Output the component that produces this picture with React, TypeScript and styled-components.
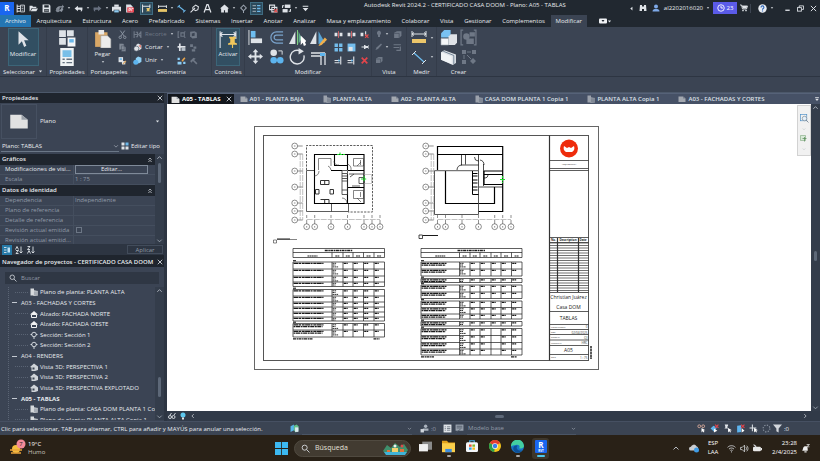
import React from "react";
import styled, { createGlobalStyle } from "styled-components";

const c = {
  bar: "#212830",
  ribbon: "#3b4453",
  line: "#2d3542",
  dark: "#1f252e",
  pane: "#3b4454",
  text: "#e8ebef",
  dim: "#929ba8",
  blue: "#6cb8ea",
  icon: "#dfe3e8",
  off: "#6f7886",
};

const Global = createGlobalStyle`
  *, *::before, *::after { box-sizing: border-box; }
  html, body { margin: 0; }
  body { background: ${c.ribbon}; color: ${c.text}; font-family: "Open Sans", "Noto Sans", sans-serif; font-size: 6px; line-height: 8px; overflow: hidden; }
  button, input, select { font: inherit; color: inherit; margin: 0; padding: 0; border: 0; background: none; border-radius: 0; }
  button { display: inline-flex; align-items: center; justify-content: center; white-space: nowrap; }
  svg { display: block; flex: none; }
`;

/* ---------- icons, all on a 16 unit grid ---------- */
const W = c.icon;
const S = { fill: "none", stroke: W, strokeWidth: 1.8 };
const icons: Record<string, React.ReactNode> = {
  home: <><path d="M2 1v14M2 4h5M2 8h5M2 13h5" {...S} /><path d="M8 2h7v12H8z" fill="none" stroke={W} strokeWidth="1.5" /><path d="M10 5h3M10 8h3M10 11h3" {...S} strokeWidth="1.2" /></>,
  open: <path d="M1 13V3h5l1 2h6v2H5l-3 6zm2 0 3-5h10l-3 5z" fill={W} />,
  save: <path d="M1 1h12l2 2v12H1zm3 1v4h8V2zm0 7v5h8V9zm1 1h6v1H5zm0 2h6v1H5z" fill={W} fillRule="evenodd" />,
  sync: <><path d="M2 8l4-4 3 3-4 5zM8 12l4 2 3-5-3-3z" fill="#8d95a0" /><path d="M7 4h6V1l3 4-3 3V6H7z" fill="#8d95a0" /><circle cx="5" cy="11" r="3.500" fill="#7d8590" /></>,
  undo: <path d="M1 8l6-5v3h8v3c0 3-1 4-3 5 1-3 0-4-2-4H7v3z" fill={W} />,
  redo: <path d="M15 8L9 3v3H1v3c0 3 1 4 3 5-1-3 0-4 2-4h3v3z" fill="#687180" />,
  print: <><path d="M4 1h8v4H4z" fill={W} /><path d="M0 5h16v8h-3v-3H3v3H0z" fill={W} /><path d="M4 11h8v4H4z" fill="#8dc9ee" /></>,
  pdf: <><path d="M2 1h8l4 4v10H2z" fill="#dbe0e6" /><path d="M4 6h12v9H4z" fill="#e8414e" /><path d="M7 13V8h3v3H7M12 13V8h3" stroke="#fff" fill="none" strokeWidth="1.3" /></>,
  pinDim: <><path d="M1 1v14M1 4h13M14 1v6" {...S} /><path d="M8 7h6v2l-1 1v2h2v1H7v-1h2v-2L8 9z" fill="#e6c56a" /></>,
  measure: <><path d="M1 2v5M1 4h14M15 2v5" {...S} /><rect x="0" y="9" width="16" height="5" fill="#e8c668" /></>,
  align: <><path d="M3 4l10 8" stroke={c.blue} strokeWidth="1.8" fill="none" /><path d="M1 6l4-4M11 15l4-4" stroke={c.blue} strokeWidth="1.8" /></>,
  tag: <><path d="M5 6l5-4 5 3-1 5-4 2-5-3z" {...S} /><path d="M1 15L9 7" {...S} /></>,
  text: <path d="M2 15L7 1h2l5 14M4 10h8" {...S} strokeWidth="2.2" />,
  house3d: <path d="M0 8l8-7 8 7h-2v7H9v-4H7v4H2V8z" fill={W} />,
  section: <><circle cx="8" cy="7" r="4.500" {...S} /><path d="M1 7h3M12 7h3M8 12v4" {...S} /></>,
  sectionOff: <><path d="M8 2l5 5-5 5-5-5z" fill="none" stroke="#98a1ad" strokeWidth="1.800" /><path d="M8 12v4" stroke="#98a1ad" strokeWidth="1.800" /></>,
  thin: <><path d="M1 3h6M1 8h6M1 13h6" {...S} strokeWidth="1.2" /><path d="M9 3h6M9 8h6M9 13h6" stroke={c.blue} strokeWidth="2.4" /></>,
  closeHidden: <><path d="M1 2h9v8H1zM5 6h9v8H5z" {...S} /><path d="M9 9l6 6M15 9l-6 6" stroke="#e24c4c" strokeWidth="2" /></>,
  windows: <><rect x="5" y="1" width="10" height="6" fill={W} /><rect x="1" y="9" width="9" height="6" fill={W} /><path d="M1 7V3h3M15 9v4h-3" {...S} /></>,
  more: <path d="M3 3h10v2H3zM3 7h10l-5 6z" fill={W} />,
  bino: <path d="M2 2h4v3h4V2h4l1 12h-5v-4H6v4H1z" fill={W} />,
  user: <><circle cx="8" cy="5" r="4" fill="#7ea9e8" /><path d="M1 15c0-4 3-5 7-5s7 1 7 5z" fill="#7ea9e8" /></>,
  clock: <><circle cx="8" cy="8" r="6.500" fill="none" stroke="#fff" strokeWidth="1.8" /><path d="M8 4v4h4" fill="none" stroke="#fff" strokeWidth="1.8" /></>,
  cart: <><path d="M0 2h3l2 8h8l2-6H4" {...S} /><path d="M4 4h10l-1 5H6z" fill={W} /><circle cx="6" cy="13" r="1.700" fill={W} /><circle cx="12" cy="13" r="1.700" fill={W} /></>,
  help: <><circle cx="8" cy="8" r="7.500" fill="#e8ecf2" /><path d="M5.500 6c0-4 5-3 5 0 0 2-2.500 2-2.500 4M8 11.500V13.500" fill="none" stroke="#2d65b8" strokeWidth="2" /></>,
  min: <path d="M3 12h10" stroke={W} strokeWidth="3" />,
  restore: <><rect x="1" y="6" width="9" height="8" {...S} strokeWidth="2" /><path d="M5 6V2h10v8h-4" {...S} strokeWidth="2" /></>,
  close: <path d="M2 2l12 12M14 2L2 14" stroke={W} strokeWidth="2.2" />,
  left: <path d="M11 2v12L4 8z" fill={W} />,
  arrow: <path d="M4 1v12l3-3 2 5 2-1-2-5h4z" fill={W} />,
  props: <><path d="M1 1h6v6H1zM8 1h6v6H8zM1 8h6v6H1z" fill={W} /><path d="M8 7h8v9H8z" fill="#f3f5f7" stroke={c.ribbon} /><rect x="10" y="9" width="4" height="3" fill={c.blue} /></>,
  propSheet: <><rect x="2" y="0" width="12" height="16" fill="#f0f3f5" /><rect x="4" y="2" width="8" height="6" fill="#79bfe8" /><path d="M4 10h2M7.500 10h5M4 13h2M7.500 13h5" stroke="#63717f" strokeWidth="1.2" /></>,
  paste: <><rect x="1" y="2" width="11" height="13" fill="#d9a766" /><rect x="4" y="0" width="5" height="4" fill="#e8e8e8" /><path d="M6 5h6l3 3v8H6z" fill="#ececec" stroke="#9a9a9a" strokeWidth=".5" /></>,
  cut: <><circle cx="4" cy="13" r="2.200" fill="none" stroke={c.dim} strokeWidth="1.500" /><circle cx="12" cy="13" r="2.200" fill="none" stroke={c.dim} strokeWidth="1.500" /><path d="M5 11l7-10M11 11L4 1" stroke={c.dim} strokeWidth="1.600" /></>,
  copy: <path d="M2 1h7l2 2v9H2zM6 5h5l3 3v7H6z" fill="#838c98" stroke={c.ribbon} strokeWidth=".8" />,
  match: <><rect x="1" y="2" width="8" height="9" fill={W} /><rect x="3" y="4" width="4" height="3" fill={c.blue} /><path d="M7 9h6v6H7z" fill={W} /><path d="M9 14l5-5" stroke="#d9a766" strokeWidth="2.500" /></>,
  cope: <path d="M2 2v12M2 8h6M5 4h3v8H5M14 2v12M14 4l-4 4 4 4" fill="none" stroke={c.off} strokeWidth="2" />,
  cutGeo: <><path d="M5 4l4-3 6 3v6l-4 3" fill={W} /><circle cx="6" cy="10" r="4.500" fill={W} stroke={c.ribbon} /><path d="M10 5l4-2v6z" fill="#e8786a" /></>,
  join: <><path d="M5 4l4-3 6 2v7l-4 3H5z" fill="#8fd0f5" /><circle cx="5" cy="11" r="4.500" fill="#5db4ee" /></>,
  geoA: <path d="M4 3H2v10h2M7 5h6v6H7zM13 3h2M13 13h2" fill="none" stroke={c.off} strokeWidth="2" />,
  geoB: <><path d="M2 3l8-1 4 3v9l-8 1-4-4z" fill={c.off} /><path d="M5 6l5-1v5l-5 1z" fill={c.ribbon} /></>,
  geoC: <><path d="M5 1v13M1 7h14" stroke={W} strokeWidth="3" /><path d="M8 9h7v5H8z" fill="#b9c2cb" /></>,
  geoD: <path d="M2 2h5v5H2zM8 6h5v4H8zM5 11h6v4H5z" fill={c.off} />,
  geoE: <><path d="M1 3h4v4H1zM1 10h7v5H1zM11 10h4v4h-4z" fill="#8ccdf5" /><path d="M8 8l5-6 2 2-5 6z" fill="#e9a44a" /></>,
  geoF: <path d="M2 9l6-6 4 2-3 2 6 6-2 2-6-6-3 3z" fill={c.off} />,
  activate: <><path d="M1 1v15M15 1v7M1 4h14M3 2L1 4l2 2M13 2l2 2-2 2" fill="none" stroke={W} strokeWidth="1" /><path d="M9 6h6v1l-1 1v3l2 1v1H8v-1l2-1V8L9 7zM11.500 13h1v3h-1z" fill="#f0c75c" /></>,
  alignT: <><path d="M1 0v16" stroke={W} strokeWidth="1" /><path d="M3 1h5v7H3z" fill="#6ebdf0" /><path d="M3 9h12v5H3z" fill={W} /></>,
  offset: <path d="M15 2H8a6 6 0 000 12h7M15 5.500H8a2.500 2.500 0 000 5h7" fill="none" stroke="#7aa3cc" strokeWidth="1.300" />,
  mirrorA: <><path d="M6 2v12H0z" fill={W} /><path d="M8 1v14" stroke="#7fd07f" /><path d="M9 2l3 7-3 5z" fill="#5fae8c" /><path d="M11 6v9l2-2 1 3 2-1-1-3h2z" fill="#fff" /></>,
  mirrorB: <><path d="M6 2v12H0z" fill={W} /><path d="M8 2v12l6-1z" fill="#5aa4d4" /><path d="M9 14l5-6 2 2-5 5-3 1z" fill="#f1b04c" /></>,
  move: <path d="M8 0l3 3.500H9V7h3.500V5L16 8l-3.500 3V9H9v3.500h2L8 16l-3-3.500h2V9H3.500v2L0 8l3.500-3v2H7V3.500H5z" fill={W} />,
  copyT: <><circle cx="5" cy="4" r="3.500" fill={W} /><path d="M10 2h4v4" fill="none" stroke={W} /><circle cx="5" cy="12" r="3.500" fill="#5db4ee" /><circle cx="12" cy="12" r="3.500" fill="#5db4ee" /></>,
  rotate: <><path d="M11 3a6.500 6.500 0 103 4" fill="none" stroke={W} strokeWidth="1.300" /><path d="M9 0l5 3-5 3z" fill={W} /></>,
  trim: <><path d="M0 4h14M0 7h10v9M14 4v12" fill="none" stroke={W} strokeWidth="1.300" /><path d="M9 4h5v3h-5z" fill="#5db4ee" /></>,
  split: <><path d="M1 5h5v6H1zM10 5h5v6h-5z" fill={W} /><path d="M8 2v12" stroke="#e86a6a" strokeWidth="1.500" /></>,
  splitX: <><path d="M1 5h5v6H1zM9 2h2v8H9z" fill={W} /><path d="M9 8l6 6M15 8l-6 6" stroke="#e24c4c" strokeWidth="2" /></>,
  array: <path d="M1 1h6v6H1zM9 1h6v6H9zM1 9h6v6H1zM9 9h6v6H9z" fill="#74bdec" />,
  scale: <><path d="M1 1h14v14H1z" fill="#74bdec" /><path d="M3 7h7v7H3z" fill={W} /></>,
  pin: <path d="M1 7h5V4h3v2h5V4h1v8h-1v-2H9v2H6V9H1z" fill={W} />,
  extend: <><path d="M1 8h9M1 12h9" stroke={W} strokeWidth="2" /><path d="M12 1v14" stroke={W} strokeWidth="2" /><path d="M8 5l3 3-3 3z" fill="#5db4ee" /></>,
  del: <path d="M3 3l10 10M13 3L3 13" stroke="#e2454b" strokeWidth="3" />,
  bulb: <path d="M8 1a5 5 0 00-2 9v4h4v-4a5 5 0 00-2-9z" fill={c.off} />,
  cube: <><path d="M2 5l5-3h8v8l-4 4H2z" fill={c.off} /><path d="M2 6h9v8" fill="none" stroke={c.ribbon} /></>,
  brush: <path d="M1 14l2-5 9-8 2 2-8 9z" fill={c.off} />,
  lines: <path d="M1 3h13M1 8h10M6 13h8M13 6v8" fill="none" stroke={c.off} strokeWidth="2" />,
  ruler: <><path d="M1 1v6M15 1v6M1 4h14M3 2.500L1 4l2 1.500M13 2.500L15 4l-2 1.500" fill="none" stroke={W} /><path d="M1 9h14v4H1z" fill="#ecc66a" /></>,
  diag: <><path d="M3 4l10 9" stroke="#6ebdf0" strokeWidth="1.200" /><path d="M1 6l4-4M11 15l4-4" stroke={W} /></>,
  create: <><path d="M1 4l3-3h6v4L8 8H1z" fill="#79c2f2" /><path d="M8 7l2-2h6v8l-2 2H8z" fill={W} /><path d="M1 9h7v6H1z" fill="#f4f6f8" stroke="#b8c0c8" strokeWidth=".5" /></>,
  assembly: <><path d="M3 1H1v14h2M13 1h2v14h-2" fill="none" stroke={c.off} strokeWidth="1.200" /><circle cx="6" cy="7" r="3" fill={c.off} /><path d="M6 9h7v5H6zM9 3h5v4H9z" fill={c.off} /></>,
  parts: <><path d="M1 4l3-2 11 4v8l-3 2-11-5z" fill={W} /><path d="M1 4l10 4v7L1 11z" fill="#f1f4f6" /><path d="M3 3l10 4v8" fill="none" stroke="#5e7488" strokeWidth=".8" /></>,
  group: <><path d="M1 1h4v4H1zM11 1h4v4h-4zM1 11h4v4H1zM12 9l3 3-3 3-3-3z" fill={c.off} /><path d="M6 3h4M3 6v4M6 6l4 4" fill="none" stroke={c.off} /></>,
  sheet: <><path d="M1 3h9l5 4v7H1z" fill="#e2e2e2" /><path d="M10 3v4h5z" fill="#9aa0a8" /></>,
  plan: <><path d="M1 1h7v4h3v10H1z" fill="#d6d9dc" /><path d="M7 6h8v9H7z" fill="#a7adb5" stroke="#f2f2f2" strokeWidth=".8" /></>,
  elevation: <><path d="M0 9l8-7 8 7z" fill="#f1f1f1" /><path d="M3 9h10v6H3z" fill="none" stroke="#f1f1f1" strokeWidth="2" /></>,
  view3d: <><path d="M0 8l8-7 8 6v7l-6 2H3V9z" fill="#cfd3d8" /><path d="M5 9h4v4H5z" fill="#3b4453" /></>,
  search: <><circle cx="6.500" cy="6.500" r="4.500" {...S} strokeWidth="1.500" /><path d="M10 10l5 5" {...S} strokeWidth="1.500" /></>,
  editType: <><path d="M1 1h6v6H1zM9 9h6v6H9zM1 9h6v6H1z" fill={W} /><path d="M9 1h6v6H9z" fill={c.blue} /></>,
  sortG: <><path d="M2 3h5M2 8h5M2 13h5" {...S} /><path d="M9 3h5v10H9z" fill="#bfe2f7" /></>,
  sortA: <path d="M1 7l3-6 3 6M2 9h5l-5 6h5M12 1v13M9 11l3 3 3-3" {...S} />,
  sortZ: <path d="M1 1h5L1 7h5M1 15l3-6 3 6M12 1v13M9 11l3 3 3-3" {...S} />,
  glasses: <><circle cx="4" cy="10" r="3" {...S} /><circle cx="11" cy="10" r="3" {...S} /><path d="M4 6l3-4M12 6l3-4" {...S} /></>,
  lamp: <><circle cx="8" cy="6" r="5" fill="#5ec8ee" /><path d="M6 11h4v4H6z" fill="#e8e8e8" /></>,
  chevL: <path d="M10 3L5 8l5 5" {...S} />,
  chevR: <path d="M6 3l5 5-5 5" {...S} />,
  chevD: <path d="M3 6l5 5 5-5" fill="none" stroke="#aab2bd" strokeWidth="1.800" />,
  chevU: <path d="M3 11l5-5 5 5" fill="none" stroke="#c5cbd4" strokeWidth="1.800" />,
  fold: <path d="M4 7l4-4 4 4M4 13l4-4 4 4" {...S} strokeWidth="2.200" />,
  tri: <path d="M3 5h10l-5 6z" fill={W} />,
  worksets: <><path d="M1 4l6-3v10l-6 3z" fill="#56b6e8" /><path d="M7 3l5-2 3 3v8l-5 3-3-4z" fill="#63c08a" /><path d="M9 6h6v8H9z" fill="#dbe8ee" /></>,
  people: <><circle cx="10" cy="4" r="3" fill="#aab2bd" /><path d="M5 8h10v4H5z" fill="#aab2bd" /><path d="M1 9h6v6H1z" fill="#cfd5dc" /></>,
  list: <><path d="M1 1h14v14H1z" fill="#dfe3e8" /><path d="M3 5h2M7 5h6M3 8h2M7 8h6M3 11h2M7 11h6" stroke="#4b5564" strokeWidth="1.200" /></>,
  listOff: <><path d="M1 1h14v11H1z" fill="#98a1ad" /><path d="M3 4h10M3 7h10M2 15l8-6" stroke="#4b5564" strokeWidth="1.400" /></>,
  selLink: <><circle cx="4" cy="4" r="2.500" fill="none" stroke="#e0b09f" strokeWidth="1.500" /><circle cx="11" cy="4" r="2.500" fill="none" stroke="#e0b09f" strokeWidth="1.500" /><path d="M8 7v8l2-2 2 2 1-1-1-3h3z" fill="#fff" /></>,
  selUnder: <><path d="M1 8l5-5 6 3-4 8z" fill="#5db4ee" /><path d="M9 1l6 6M15 1L9 7" stroke="#e2454b" strokeWidth="2" /><path d="M7 8v7l6-3z" fill="#fff" /></>,
  selPin: <><path d="M3 1h6v2L8 4v3l3 1H2l2-1V4z" fill={W} /><path d="M9 7v8l2-2 2 2 1-1-1-3h3z" fill="#fff" /></>,
  selFace: <><path d="M2 3l7-1v12l-7 1z" fill="#5db4ee" /><path d="M9 1l6 6M15 1L9 7" stroke="#e2454b" strokeWidth="2" /><path d="M10 7v8l5-3z" fill="#fff" /></>,
  selDrag: <><path d="M6 1v12M1 7h12" {...S} /><path d="M9 7v8l2-2 2 2 1-1-1-3h3z" fill="#fff" /></>,
  spinner: <circle cx="8" cy="8" r="6" fill="none" stroke="#8b94a1" strokeWidth="2" strokeDasharray="2.200 2.500" />,
  funnel: <path d="M0 1h16L10 8v7l-4-2V8z" fill="#d2d6db" />,
  screen: <><rect x="0" y="3" width="16" height="10" rx="2" fill="#f0f2f5" /><path d="M5 6h6l-3 4z" fill={c.bar} /></>,
  zoomR: <><rect x="1" y="1" width="11" height="11" fill="none" stroke="#4d90c8" strokeWidth="1.200" /><circle cx="8" cy="8" r="4" fill="#e6f1fa" stroke="#7a8794" strokeWidth="1.200" /><path d="M11 11l4 4" stroke="#7a8794" strokeWidth="1.600" /></>,
  pan: <><path d="M1 1h10v10H1z" fill="#d9ead9" stroke="#6a9a6a" /><path d="M5 7h8M9 4v9" stroke="#5d8f5d" strokeWidth="1.500" /></>,
  win: <path d="M0 0h7.500v7.500H0zM8.500 0H16v7.500H8.500zM0 8.500h7.500V16H0zM8.500 8.500H16V16H8.500z" fill="#3cb9f2" />,
  task: <><path d="M4 2h12v10H4z" fill="#8a8a8a" /><path d="M0 5h11v9H0z" fill="#f0f0f0" /></>,
  folder: <><path d="M0 1h6l2 2h8v4H0z" fill="#e2a21c" /><path d="M0 4h16v11H0z" fill="#fbcf4b" /><path d="M4 11h8v4H4z" fill="#3d8ee0" /></>,
  store: <><path d="M5 4V1h6v3" fill="none" stroke="#49b4ee" strokeWidth="1.500" /><rect x="0" y="3" width="16" height="13" rx="2" fill="#f4f6f8" /><path d="M4 6h3.500v3H4z" fill="#f0512d" /><path d="M8.500 6H12v3H8.500z" fill="#7eba2a" /><path d="M4 10h3.500v3H4z" fill="#2ba5e8" /><path d="M8.500 10H12v3H8.500z" fill="#fbb91a" /></>,
  chrome: <><circle cx="8" cy="8" r="8" fill="#f7c61b" /><path d="M8 8L1 4a8 8 0 0114 0z" fill="#e33e2f" /><path d="M8 8L1 4a8 8 0 006 12z" fill="#2c9f4b" /><circle cx="8" cy="8" r="3.800" fill="#fff" /><circle cx="8" cy="8" r="3" fill="#3b7ee8" /></>,
  edge: <><circle cx="8" cy="8" r="8" fill="#1976c8" /><path d="M0 8a8 8 0 0116-1c0 3-3 4-6 3 2-3-1-5-4-4-3 0-5 1-6 2z" fill="#43cfa0" /><path d="M3 12c-1-4 2-6 5-5-2 2-1 5 2 6 2 0 3 0 4-1-3 5-9 5-11 0z" fill="#0d4f96" /></>,
  cloud: <><path d="M3 12a3 3 0 010-6 5 5 0 019-1 4 4 0 011 7z" fill="#c9cdd2" /><circle cx="12" cy="11" r="4" fill="#3f9be4" /></>,
  wifi: <path d="M1 6c4-4 10-4 14 0M3.500 9c3-2.500 6-2.500 9 0M6 11.500c1.500-1 2.500-1 4 0M8 13v2" {...S} strokeWidth="1.400" />,
  volume: <path d="M1 6h3l4-4v12l-4-4H1zM10 5c2 2 2 4 0 6M12 3c3 3 3 7 0 10" {...S} strokeWidth="1.300" />,
  battery: <><rect x="0" y="5" width="14" height="8" rx="2" fill="#e8e8e8" /><path d="M14 7h2v4h-2z" fill="#e8e8e8" /><path d="M1 1l4 3-1 4" {...S} /></>,
  bell: <><path d="M2 12c2-2 1-7 5-8 5-1 5 3 5 8z" fill="#eee" /><path d="M6 13h4v2H6z" fill="#eee" /><path d="M10 1h5l-5 4h5" stroke="#fff" fill="none" strokeWidth="1.200" /></>,
};

const Icon = ({ n, s = 9 }: { n: string; s?: number }) => (
  <svg width={s} height={s} viewBox="0 0 16 16" aria-hidden="true">{icons[n]}</svg>
);

/* ---------- frame ---------- */
const Shell = styled.div`display: flex; flex-direction: column; height: 100vh; min-height: 400px;`;
const TitleBar = styled.header`display: flex; align-items: stretch; height: 15px; background: ${c.bar}; flex: none; padding-top: 1px;`;
const Tools = styled.div`display: flex; align-items: center;`;
const Tool = styled.button<{ $on?: boolean }>`width: 13px; height: 13px; background: ${p => (p.$on ? "#2c4a5c" : "transparent")}; outline: ${p => (p.$on ? "1px solid #3f6c82" : "none")}; outline-offset: -1px;`;
const Drop = styled.button`width: 6px; height: 10px;`;
const Gap = styled.span<{ $w?: number; $line?: boolean }>`width: ${p => p.$w ?? 4}px; height: 9px; border-left: ${p => (p.$line ? "1px solid #3d4551" : "0")};`;
const Logo = styled.button`width: 14px; height: 13px; background: #1a66f0; color: #fff; font-weight: 700; font-size: 8px;`;
const Title = styled.h1`flex: 1; margin: 0; font-size: 6px; line-height: 9px; font-weight: 400; padding-left: 52px; white-space: nowrap; overflow: hidden;`;
const Account = styled.button`gap: 4px; padding: 0 2px;`;
const Badge = styled.button`background: #5b5be8; color: #fff; height: 12px; width: 24px; gap: 2px;`;

const TabRow = styled.nav`display: flex; height: 12px; background: ${c.bar}; flex: none;`;
const TabStrip = styled.div`display: flex; justify-content: space-between; width: 587px;`;
const Tab = styled.button<{ $kind?: "file" | "active" }>`
  padding: 0 5px; height: 12px;
  background: ${p => (p.$kind === "file" ? "#2476b3" : p.$kind === "active" ? c.ribbon : "transparent")};
`;
const Ribbon = styled.section`
  display: grid; grid-template-columns: 47px 41px 43px 81px 33px 127px 35px 30px 43px 1fr;
  height: 50px; flex: none; background: ${c.ribbon}; border-bottom: 1px solid ${c.line};
`;
const Panel = styled.div`display: flex; flex-direction: column; border-right: 1px solid #343c4a; &:nth-last-child(1) { border: 0; }`;
const PanelBody = styled.div<{ $gap?: number; $start?: boolean }>`flex: 1; display: flex; justify-content: ${p => (p.$start ? "flex-start" : "center")}; padding-left: ${p => (p.$start ? 2 : 0)}px; align-items: center; gap: ${p => p.$gap ?? 0}px;`;
const PanelName = styled.div`height: 9px; line-height: 8px; text-align: center; white-space: nowrap; display: flex; justify-content: center; align-items: center; gap: 3px;`;
const Big = styled.button<{ $w?: number; $on?: boolean }>`
  flex-direction: column; width: ${p => p.$w ?? 22}px; height: 38px; gap: 2px; justify-content: flex-start; padding-top: 1px;
  background: ${p => (p.$on ? "#324f62" : "transparent")}; border: 1px solid ${p => (p.$on ? "#3c6578" : "transparent")};
`;
const Stack = styled.div<{ $gap?: number }>`display: flex; flex-direction: column; gap: ${p => p.$gap ?? 4}px;`;
const Small = styled.button<{ $off?: boolean }>`justify-content: flex-start; height: 9px; gap: 3px; color: ${p => (p.$off ? c.off : c.text)};`;
const Mini = styled.div<{ $cols: string; $row: number }>`display: grid; grid-template-columns: ${p => p.$cols}; grid-auto-rows: ${p => p.$row}px; place-items: center; place-content: center;`;
const OptionsBar = styled.div`height: 16px; flex: none; background: ${c.ribbon}; border-bottom: 1px solid #4c586a;`;

const Body = styled.main`flex: 1; min-height: 0; display: flex; background: ${c.dark};`;
const Side = styled.aside`width: 164px; flex: none; display: flex; flex-direction: column; gap: 2px;`;
const Pane = styled.section<{ $grow?: boolean }>`display: flex; flex-direction: column; min-height: 0; flex: ${p => (p.$grow ? 1 : "none")}; background: ${c.pane};`;
const PaneTitle = styled.h2`
  display: flex; justify-content: space-between; align-items: center; flex: none; margin: 0; height: 10px; padding: 0 1px 0 2px;
  background: ${c.dark}; font-size: 6px; font-weight: 600; line-height: 8px; white-space: nowrap;
`;
const TypeBox = styled.button`display: flex; justify-content: flex-start; height: 36px; padding: 0 4px 0 1px; gap: 3px;`;
const Thumb = styled.span`width: 36px; height: 35px; border: 1px solid #465061; display: grid; place-items: center;`;
const Grow = styled.span`flex: 1; text-align: left;`;
const TypeRow = styled.div`display: flex; align-items: center; height: 15px; gap: 2px; padding: 0 3px 1px 1px;`;
const SelectWrap = styled.label<{ $w: number; $dim?: boolean }>`display: flex; align-items: center; width: ${p => p.$w}px; border-bottom: 1px solid ${p => (p.$dim ? "#4a5566" : "#6b7787")}; height: 12px; color: ${p => (p.$dim ? c.dim : c.text)};`;
const Select = styled.select`appearance: none; flex: 1; min-width: 0; outline: 0; padding-left: 1px;`;
const PlainButton = styled.button`gap: 2px;`;
const PropArea = styled.div`display: flex; height: 90px; overflow: hidden;`;
const PropTable = styled.table`
  flex: 1; border-collapse: collapse; display: block;
  tbody { display: block; } tr { display: grid; grid-template-columns: 74px 1fr; height: 10px; }
  th, td { font-weight: 400; text-align: left; padding: 0 0 0 1px; line-height: 9px; white-space: nowrap; border-bottom: 1px solid #444e5e; color: ${c.dim}; }
  th { padding-left: 5px; border-right: 1px solid #444e5e; }
`;
const SectionRow = styled.tr`
  && { display: flex; height: 11px; background: ${c.dark}; }
  && th { flex: 1; display: flex; justify-content: space-between; align-items: center; padding: 0 2px; border: 0; color: ${c.text}; font-weight: 600; }
`;
const LiveRow = styled.tr`&& th, && td { color: ${c.text}; }`;
const Edit = styled.button`display: flex; width: 73px; height: 9px; border: 1px solid #7f8a99;`;
const Check = styled.input`appearance: none; display: block; width: 6px; height: 6px; margin: 1px 0 0 1px; border: 1px solid #6c7685;`;
const Scroll = styled.div<{ $top: number; $h: number }>`
  width: 9px; flex: none; background: #343d4b; display: flex; flex-direction: column; align-items: center; justify-content: space-between; position: relative;
  &::after { content: ""; position: absolute; top: ${p => p.$top}%; width: 3px; height: ${p => p.$h}%; border-radius: 2px; background: #5d6878; }
`;
const PaneFoot = styled.div`display: flex; align-items: center; height: 11px; background: ${c.line}; padding: 0 1px 0 2px; gap: 2px;`;
const FootBtn = styled.button<{ $on?: boolean }>`width: 10px; height: 10px; background: ${p => (p.$on ? "#277aa8" : "transparent")};`;
const Apply = styled.button`margin-left: auto; width: 36px; height: 9px; border: 1px solid #424c5b; color: ${c.dim};`;
const SearchBox = styled.label`display: flex; align-items: center; gap: 4px; flex: none; height: 12px; margin: 5px 5px 3px; padding: 0 4px; background: #2f3744; input { flex: 1; min-width: 0; outline: 0; } input::placeholder { color: ${c.dim}; opacity: 1; }`;
const TreeArea = styled.div`flex: 1; min-height: 0; display: flex; margin-bottom: 1px;`;
const Tree = styled.ul`
  flex: 1; min-width: 0; height: 100%; margin: 0 0 0 8px; padding: 0; list-style: none; overflow: hidden; display: grid; grid-auto-rows: 8%; border-left: 1px dotted #5a6474;
`;
const Leaf = styled.li<{ $group?: boolean; $bold?: boolean }>`
  display: flex; align-items: center; gap: ${p => (p.$group ? 4 : 2)}px; padding-left: ${p => (p.$group ? 3 : 6)}px; white-space: nowrap; font-weight: ${p => (p.$bold ? 700 : 400)};
  &::before { content: ""; width: ${p => (p.$group ? 5 : 13)}px; border-top: 1px ${p => (p.$group ? "solid #c3c9d1" : "dotted #5a6474")}; flex: none; }
`;
const Splitter = styled.div`width: 3px; flex: none; background: ${c.line};`;

const Work = styled.div`flex: 1; min-width: 0; display: flex; flex-direction: column;`;
const ViewTabs = styled.div`display: flex; height: 11px; flex: none; background: #465166; border-top: 1px solid #566278; padding-left: 1px;`;
const ViewTab = styled.button<{ $on?: boolean }>`
  gap: 2px; padding: 0 ${p => (p.$on ? 2 : 13)}px 0 ${p => (p.$on ? 3 : 6)}px; background: ${p => (p.$on ? "#12161c" : "transparent")}; font-weight: ${p => (p.$on ? 700 : 600)}; color: ${p => (p.$on ? "#fff" : "#dde1e8")};
  svg { opacity: ${p => (p.$on ? 1 : 0.6)}; }
`;
const CanvasRow = styled.div`flex: 1; min-height: 0; display: flex;`;
const Canvas = styled.div`flex: 1; min-width: 0; background: #fff; padding: 22px 0 0 87px; overflow: hidden; display: flex; justify-content: space-between; align-items: flex-start;`;
const NavBar = styled.div`width: 14px; margin-top: -21px; height: 51px; background: #f1f1f1; border: 1px solid #d2d2d2; display: flex; flex-direction: column; align-items: center; gap: 4px; padding-top: 8px; flex: none;`;
const ViewBar = styled.div`height: 10px; flex: none; display: flex; align-items: center; background: #313a48; padding: 0 1px; gap: 3px;`;
const ThumbH = styled.span`width: 9px; height: 3px; border-radius: 2px; background: #5d6878; margin: 0 auto;`;

const Status = styled.footer`display: flex; align-items: center; height: 14px; flex: none; background: ${c.ribbon}; border-top: 1px solid #465062; padding: 0 31px 0 1px; gap: 3px;`;
const Msg = styled.span`width: 286px; white-space: nowrap;`;
const Space = styled.span`flex: 1;`;
const Dim = styled.span`color: ${c.dim};`;

const Taskbar = styled.footer`display: grid; grid-template-columns: 1fr auto 1fr; align-items: center; height: 26px; flex: none; background: #292117; color: #fff; padding: 0 10px;`;
const Weather = styled.button`justify-self: start; gap: 2px; text-align: left; span { display: block; } div span + span { color: #c9c5be; }`;
const Apps = styled.div`display: flex; align-items: center; gap: 6px; margin-left: 4px;`;
const AppBtn = styled.button<{ $on?: boolean; $run?: string }>`
  width: 17px; height: 21px; flex-direction: column; gap: 2px; border-radius: 3px; background: ${p => (p.$on ? "#3d362c" : "transparent")};
  &::after { content: ""; width: ${p => (p.$on ? 8 : 4)}px; height: 2px; border-radius: 1px; background: ${p => p.$run ?? "transparent"}; }
`;
const TaskSearch = styled.label`
  display: flex; align-items: center; gap: 5px; width: 117px; height: 17px; padding: 0 2px 0 6px; border-radius: 9px; background: #423b31; border: 1px solid #504a40; font-size: 7px;
  input { flex: 1; min-width: 0; outline: 0; } input::placeholder { color: #e3e0db; opacity: 1; }
`;
const Tray = styled.div`justify-self: end; display: flex; align-items: center; gap: 4px; line-height: 9px;`;
const Lang = styled.span`text-align: center; width: 20px; white-space: pre-line;`;
const Clock = styled.time`text-align: right; width: 31px; white-space: pre-line;`;

/* ---------- sheet drawing ---------- */
const K = "#1b1b1b";
const rowsY = [146, 154, 171, 187, 203, 211, 220];
const Bubbles = ({ x, xs }: { x: number; xs: number[] }) => (
  <g fill="none" stroke="#444" strokeWidth=".6">
    {rowsY.map(y => <g key={y}><circle cx={x} cy={y} r="2.900" /><path d={`M${x + 3} ${y}h5M${x - .8} ${y}h1.600`} /></g>)}
    {xs.map(v => <g key={v}><circle cx={v} cy="226.700" r="2.900" /><path d={`M${v} 224v-4M${v} 218v-3M${v} 226v1.600`} /></g>)}
    <path d={`M${x + 5.500} 154v66M${x + 8} 154v66M${xs[0]} 219.500H${xs[6]}`} stroke="#999" strokeDasharray="6 1" />
  </g>
);

const cols1 = [293, 332, 343, 353, 363.5, 374, 384.5];
const groups1 = [[262, 269, 276, 282, 286.5], [289.5, 296, 302, 307, 312, 317, 321], [323.5, 330, 337]];
const cols2 = [421, 459.5, 470, 480, 491, 501, 511.5, 522];
const groups2 = [[262, 269, 276], [278.5, 282.5], [285, 292, 298.5], [301, 307.5, 314, 319], [321.5, 326], [328.5, 335.5, 342.5, 349, 355]];

const Schedule = ({ cols, groups, dense }: { cols: number[]; groups: number[][]; dense?: boolean }) => {
  const l = cols[0], r = cols[cols.length - 1], mid = (l + r) / 2;
  const end = groups[groups.length - 1].slice(-1)[0];
  return (
    <g fill="none" stroke={K} strokeWidth=".7">
      <path d={`M${l} 248.500H${r}M${l} 252.500H${r}M${l} 257.500H${r}M${l} 248.500V257.500M${r} 248.500V257.500`} />
      <path d={`M${mid - 14} 250.500h28`} strokeWidth="1.300" strokeDasharray="3 .6 1.500 .5" />
      {cols.slice(0, -1).map((x, i) => {
        const m = (x + cols[i + 1]) / 2, h = i ? 2.2 : 5;
        return <path key={x} d={`M${m - h} 256h${h * 2}`} strokeWidth="1.200" strokeDasharray="1.800 .4" />;
      })}
      {cols.slice(1, -1).map(x => <path key={x} d={`M${x} 252.500V257.500`} />)}
      {groups.map(g => (
        <g key={g[0]}>
          <path d={`M${l} ${g[0] - 1.3}h3`} strokeWidth="1.100" />
          {cols.map(x => <path key={x} d={`M${x} ${g[0]}V${g[g.length - 1]}`} />)}
          {g.map(y => <path key={y} d={`M${l} ${y}H${r}`} />)}
          {g.slice(0, -1).map((y, n) => (
            <g key={y} strokeWidth="1.300">
              <path d={`M${l + .5} ${y + 1.4}h${dense ? 25 : 30}`} strokeDasharray="5 .5 2 .7 3 .4" />
              {(dense || g[0] > 322) && <path d={`M${l + .5} ${y + 3.2}h${dense ? 24 : 29}`} strokeDasharray="2 .5 4 .6" strokeWidth="1.200" />}
              <path d={`M${cols[1] + .5} ${y + 1.3}h4M${cols[1] + .5} ${y + 3}h3${g[n + 1] - y > 5 ? `M${cols[1] + .5} ${y + 4.9}h6` : ""}`} strokeWidth=".9" strokeDasharray="1.600 .4" />
              {cols.slice(2, -1).map((x, i) => (dense && i === 2 && g[0] > 327 ? null : <path key={x} d={`M${x + .7} ${y + 1.4}h4`} strokeDasharray="2.400 .4" />))}
            </g>
          ))}
        </g>
      ))}
      <path d={`M${l} ${end + 1.8}h${dense ? 13 : 20}M${r - 11} ${end + 1.8}h6`} strokeWidth="1.200" strokeDasharray="3 .6 1.500 .4" />
    </g>
  );
};

const revLines = Array.from({ length: 20 }, (_, i) => 243 + i * 2.5);

const Sheet = () => (
  <svg width="345" height="245" viewBox="254 126 345 245" role="img" aria-label="Plano A05 - TABLAS" fontFamily="Open Sans, sans-serif">
    <rect x="254.500" y="126.500" width="344" height="243" fill="none" stroke="#666" />
    <rect x="263.500" y="135.500" width="325" height="225" fill="none" stroke="#555" />

    <Bubbles x={294.7} xs={[306.7, 314.7, 331, 347.5, 364, 372, 380]} />
    <g fill="none" stroke="#333" strokeWidth=".6">
      <path d="M306.500 170V145.500H372.500V212H348" strokeDasharray="2.200 1.200" strokeWidth=".8" />
      <path d="M314 170.500h-7.500V211.500H348.500V203M331.500 203v8.500" strokeWidth=".8" />
      <path d="M314.500 154.500H364V203.500H314.500zM334.500 154v11.500M347.500 154v16M347.500 174V203M331 170.500h11M348 170.500h16M348 187.500h16M334 165.500h13" stroke="#000" strokeWidth="1.100" />
      <path d="M318.500 170v-11.500h12.500M331 158.500v7.500M331 170a5 5 0 00-3-4M314 176c3 0 5-2 5-5M347 164a5 5 0 014 6M342 198a5 5 0 015 5M334 161a4 4 0 005 4" />
      <path d="M353.500 158.500h10v7.500h-10zM353.500 190.500h10v8h-10zM360.500 160v5M360.500 192v5M357 198l4 4M357 166l4-4" />
      <path d="M320.500 180.500h8.500v4h-8.500zM324.700 180v4M320.500 199.500h8.500v4M324.700 199v4M315.500 189.500h3.500v4.500h-3.500zM330 189.500h3.500v4.500H330z" strokeWidth="1" />
      <path d="M342 170.500h5.500v24H342zM342 173.500h5M342 176h5M342 178.500h5M342 181h5M342 190h5" strokeWidth=".8" />
      <path d="M349 174h15v10M350 177l4-3M352 186h8M359 177.500h5v6h-5z" strokeWidth=".8" />
      <path d="M364 174.500h7.500v9H364" stroke="#aaa" />
      <path d="M337 154.500h8M340 152.500v2M364 176v6M361 179h6" stroke="#1edb2c" strokeWidth="1.100" strokeDasharray="2.200 .8" />
      <path d="M273.500 240h3v3h-3zM277 239.500h20" /><path d="M277 239h13" strokeWidth="1.100" />
    </g>

    <Bubbles x={425.7} xs={[437.5, 445.5, 462, 478.5, 494.7, 502.7, 511]} />
    <g fill="none" stroke="#000" strokeWidth="1.200">
      <path d="M437.500 170V146.500H502.700V211.500H478.500M437.500 154.500h65M445.500 171v32.500h49V187M484 171h19M484 174.500h19M484 184.500h19M484 171v14" />
      <path d="M434.500 170.700H478.500V214.500H434.500z" stroke="#444" strokeWidth=".9" />
      <path d="M461.500 154.500v10.500h17M465.500 154.500v10M478.500 154.500v16M474.500 157a4 4 0 004 4M457 170c0-3 2-5 5-5M483.500 164v22M480 160a5 5 0 014 5M484 178c3 0 4-1 4-4M479 187h24" strokeWidth=".7" />
      <path d="M472.500 171v23.500h6M472.500 173.500h5M472.500 176h5M472.500 180h5M472.500 183h5M472.500 187h5M472.500 190h5" strokeWidth="1" />
      <path d="M502.500 176v7M500 179.500h5" stroke="#1edb2c" strokeDasharray="2.200 .8" />
      <path d="M419 235h3.500v3.500H419z" strokeWidth=".7" /><path d="M423 235.500h15" strokeWidth=".9" />
    </g>

    <Schedule cols={cols1} groups={groups1} />
    <Schedule cols={cols2} groups={groups2} dense />

    <g fill="none" stroke="#333" strokeWidth=".8">
      <path d="M549.500 135.500V360.500" strokeWidth="1.200" />
      <path d="M549 160.500h39.500M549 168.500h39.500M549 170.500h39.500M549 237.500h39.500M549 242.500h39.500" />
      {revLines.map(y => <path key={y} d={`M549 ${y}h39.500`} strokeWidth=".7" />)}
      <path d="M557.500 238v54M578.500 238v54" strokeWidth="1.200" />
      <path d="M549 292.500h39.500M549 311.500h39.500M549 324.500h39.500M549 329.500h39.500M549 334.500h39.500M549 340h39.500M549 345.500h39.500M549 354.500h39.500" />
      <path d="M591 346v13" strokeWidth="1.600" strokeDasharray="2 .5 3 .4" />
    </g>
    <circle cx="569" cy="148.500" r="9" fill="#ee2c0c" />
    <path d="M564 146l3 2 2-1 2 1 3-2c1 3 0 5-2 6-2 0-4 0-6 0-2-1-3-3-2-6z" fill="#fff" />
    <g fill="#222" textAnchor="middle" fontSize="5">
      <text x="569" y="165" fontSize="2">ARQUITECTURA</text>
      <g fontSize="3" fontWeight="700"><text x="553.500" y="241">No.</text><text x="568" y="241">Description</text><text x="583" y="241">Date</text></g>
      <text x="568.500" y="299">Christian Juárez</text>
      <text x="568.500" y="309">Casa DOM</text>
      <text x="568.500" y="320">TABLAS</text>
      <text x="568.500" y="352">A05</text>
    </g>
    <g fill="#333" fontSize="2">
      <text x="551" y="327.500">Project number</text><text x="551" y="333">Date</text><text x="551" y="338">Drawn by</text><text x="551" y="343.500">Checked by</text><text x="551" y="358">Scale</text>
      <g fontSize="3" textAnchor="end"><text x="587.500" y="328">0</text><text x="587.500" y="333.500">02/04/2025</text><text x="587.500" y="338.500">CJJ</text><text x="587.500" y="344">HRC</text><text x="587.500" y="358.500">1 : 75</text></g>
    </g>
  </svg>
);

/* ---------- content ---------- */
type Q = string | number;
const quick: Q[] = ["home", "open", "save", "sync", "v", "undo", "v", "redo", "v", "print", "pdf", 4, "*pinDim", 3, "measure", "v", "align", "tag", "text", 4, "house3d", "v", "sectionOff", "*thin", 4, "closeHidden", "windows", "v", "more"];
const tabs = ["Arquitectura", "Estructura", "Acero", "Prefabricado", "Sistemas", "Insertar", "Anotar", "Analizar", "Masa y emplazamiento", "Colaborar", "Vista", "Gestionar", "Complementos"];
const tree: [string, string, string?][] = [
  ["plan", "Plano de planta: PLANTA ALTA"], ["", "A03 - FACHADAS Y CORTES"],
  ["elevation", "Alzado: FACHADA NORTE"], ["elevation", "Alzado: FACHADA OESTE"],
  ["section", "Sección: Sección 1"], ["section", "Sección: Sección 2"], ["", "A04 - RENDERS"],
  ["view3d", "Vista 3D: PERSPECTIVA 1"], ["view3d", "Vista 3D: PERSPECTIVA 2"], ["view3d", "Vista 3D: PERSPECTIVA EXPLOTADO"],
  ["", "A05 - TABLAS", "b"], ["plan", "Plano de planta: CASA DOM PLANTA 1 Copia 1"], ["plan", "Plano de planta: PLANTA ALTA Copia 1"],
];
const views: [string, string][] = [
  ["sheet", "A01 - PLANTA BAJA"], ["plan", "PLANTA ALTA"], ["sheet", "A02 - PLANTA ALTA"],
  ["plan", "CASA DOM PLANTA 1 Copia 1"], ["plan", "PLANTA ALTA Copia 1"], ["sheet", "A03 - FACHADAS Y CORTES"],
];
const B = ({ n, s = 9 }: { n: string; s?: number }) => <button type="button" aria-label={n}><Icon n={n} s={s} /></button>;
const D = () => <Drop aria-label="Opciones"><Icon n="tri" s={4} /></Drop>;

export default function App() {
  return (
    <Shell>
      <Global />
      <TitleBar>
        <Tools>
          <Logo>R</Logo>
          {quick.map((q, i) =>
            typeof q === "number" ? <Gap key={i} $w={q} /> : q === "v" ? <D key={i} /> : (
              <Tool key={i} $on={q[0] === "*"} aria-label={q.replace("*", "")}><Icon n={q.replace("*", "")} /></Tool>
            ))}
        </Tools>
        <Title>Autodesk Revit 2024.2 - CERTIFICADO CASA DOOM - Plano: A05 - TABLAS</Title>
        <Tools>
          <B n="left" s={5} /><Gap $w={3} />
          <Tool aria-label="Buscar"><Icon n="bino" s={8} /></Tool>
          <Account><Icon n="user" s={8} />al2202016020</Account>
          <D /><Gap $w={2} />
          <Badge><Icon n="clock" s={8} />23</Badge>
          <Tool aria-label="Tienda"><Icon n="cart" s={8} /></Tool>
          <Gap $w={6} $line />
          <Tool aria-label="Ayuda"><Icon n="help" s={9} /></Tool><D /><Gap $w={6} />
          <Tool aria-label="Minimizar"><Icon n="min" s={7} /></Tool>
          <Tool aria-label="Restaurar"><Icon n="restore" s={7} /></Tool>
          <Tool aria-label="Cerrar"><Icon n="close" s={7} /></Tool>
        </Tools>
      </TitleBar>
      <TabRow>
        <TabStrip>
          <Tab $kind="file">Archivo</Tab>
          {tabs.map(t => <Tab key={t}>{t}</Tab>)}
          <Tab $kind="active">Modificar</Tab>
        </TabStrip>
        <Gap $w={7} /><Tab aria-label="Cinta"><Icon n="screen" s={8} /><Icon n="tri" s={5} /></Tab>
      </TabRow>
      <Ribbon>
        <Panel>
          <PanelBody><Big $w={31} $on><Icon n="arrow" s={18} />Modificar</Big></PanelBody>
          <PanelName>Seleccionar <Icon n="tri" s={5} /></PanelName>
        </Panel>
        <Panel>
          <PanelBody><Stack $gap={1}><B n="props" s={18} /><B n="propSheet" s={18} /></Stack></PanelBody>
          <PanelName>Propiedades</PanelName>
        </Panel>
        <Panel>
          <PanelBody $gap={4}>
            <Big><Icon n="paste" s={18} />Pegar<Icon n="tri" s={4} /></Big>
            <Stack><B n="cut" /><B n="copy" /><B n="match" /></Stack>
          </PanelBody>
          <PanelName>Portapapeles</PanelName>
        </Panel>
        <Panel>
          <PanelBody $gap={3} $start>
            <Stack>
              <Small $off><Icon n="cope" />Recorte<Icon n="tri" s={4} /></Small>
              <Small><Icon n="cutGeo" />Cortar<Icon n="tri" s={4} /></Small>
              <Small><Icon n="join" />Unir<Icon n="tri" s={4} /></Small>
            </Stack>
            <Stack><B n="geoA" /><B n="geoC" /><B n="geoE" /></Stack>
            <Stack><B n="geoB" /><B n="geoD" /><B n="geoF" /></Stack>
          </PanelBody>
          <PanelName>Geometría</PanelName>
        </Panel>
        <Panel>
          <PanelBody><Big $w={24} $on><Icon n="activate" s={18} />Activar</Big></PanelBody>
          <PanelName>Controles</PanelName>
        </Panel>
        <Panel>
          <PanelBody $gap={3}>
            <Mini $cols="21px 21px 21px 21px" $row={19}>
              <B n="alignT" s={15} /><B n="offset" s={15} /><B n="mirrorA" s={17} /><B n="mirrorB" s={17} />
              <B n="move" s={15} /><B n="copyT" s={15} /><B n="rotate" s={17} /><B n="trim" s={16} />
            </Mini>
            <Mini $cols="13px 13px 13px" $row={13}>
              <B n="split" /><B n="split" /><B n="splitX" /><B n="array" /><B n="scale" /><B n="pin" s={8} /><B n="extend" /><B n="extend" /><B n="del" />
            </Mini>
          </PanelBody>
          <PanelName>Modificar</PanelName>
        </Panel>
        <Panel>
          <PanelBody>
            <Mini $cols="9px 8px 13px" $row={13}><B n="bulb" s={8} /><D /><B n="cube" /><B n="brush" s={8} /><D /><B n="lines" /><B n="cube" s={8} /></Mini>
          </PanelBody>
          <PanelName>Vista</PanelName>
        </Panel>
        <Panel>
          <PanelBody><Mini $cols="20px 6px" $row={19}><B n="ruler" s={16} /><D /><B n="diag" s={16} /><D /></Mini></PanelBody>
          <PanelName>Medir</PanelName>
        </Panel>
        <Panel>
          <PanelBody><Mini $cols="20px 20px" $row={19}><B n="create" s={17} /><B n="assembly" s={17} /><B n="parts" s={17} /><B n="group" s={16} /></Mini></PanelBody>
          <PanelName>Crear</PanelName>
        </Panel>
      </Ribbon>
      <OptionsBar />

      <Body>
        <Side>
          <Pane>
            <PaneTitle>Propiedades<B n="close" s={6} /></PaneTitle>
            <TypeBox><Thumb><Icon n="sheet" s={20} /></Thumb><Grow>Plano</Grow><Icon n="tri" s={5} /></TypeBox>
            <TypeRow>
              <SelectWrap $w={118}><Select aria-label="Tipo"><option>Plano: TABLAS</option></Select><Icon n="chevD" s={6} /></SelectWrap>
              <PlainButton><Icon n="editType" s={8} />Editar tipo</PlainButton>
            </TypeRow>
            <PropArea>
              <PropTable>
                <tbody>
                  <SectionRow><th>Gráficos<Icon n="fold" s={6} /></th></SectionRow>
                  <LiveRow><th>Modificaciones de visi...</th><td><Edit>Editar...</Edit></td></LiveRow>
                  <tr><th>Escala</th><td>1 : 75</td></tr>
                  <SectionRow><th>Datos de identidad<Icon n="fold" s={6} /></th></SectionRow>
                  <tr><th>Dependencia</th><td>Independiente</td></tr>
                  <tr><th>Plano de referencia</th><td /></tr>
                  <tr><th>Detalle de referencia</th><td /></tr>
                  <tr><th>Revisión actual emitida</th><td><Check type="checkbox" aria-label="Revisión actual emitida" /></td></tr>
                  <tr><th>Revisión actual emitid...</th><td /></tr>
                </tbody>
              </PropTable>
              <Scroll $top={10} $h={22}><Icon n="chevU" s={7} /><Icon n="chevD" s={7} /></Scroll>
            </PropArea>
            <PaneFoot>
              <FootBtn $on aria-label="Agrupar"><Icon n="sortG" s={8} /></FootBtn>
              <FootBtn aria-label="Ascendente"><Icon n="sortA" s={8} /></FootBtn>
              <FootBtn aria-label="Descendente"><Icon n="sortZ" s={8} /></FootBtn>
              <Apply>Aplicar</Apply>
            </PaneFoot>
          </Pane>
          <Pane $grow>
            <PaneTitle>Navegador de proyectos - CERTIFICADO CASA DOOM<B n="close" s={6} /></PaneTitle>
            <SearchBox><Icon n="search" s={8} /><input placeholder="Buscar" aria-label="Buscar en el proyecto" /></SearchBox>
            <TreeArea>
              <Tree>
                {tree.map(([ic, label, b]) => <Leaf key={label} $group={!ic} $bold={!!b}>{ic && <Icon n={ic} s={8} />}{label}</Leaf>)}
              </Tree>
              <Scroll $top={68} $h={15}><Icon n="chevU" s={7} /><Icon n="chevD" s={7} /></Scroll>
            </TreeArea>
          </Pane>
        </Side>
        <Splitter />
        <Work>
          <ViewTabs>
            <ViewTab $on><Icon n="sheet" s={9} />A05 - TABLAS<Gap $w={1} /><Icon n="close" s={6} /></ViewTab>
            {views.map(([ic, v]) => <ViewTab key={v}><Icon n={ic} s={8} />{v}</ViewTab>)}
            <Space /><B n="more" s={6} />
          </ViewTabs>
          <CanvasRow>
            <Canvas>
              <Sheet />
              <NavBar><B n="zoomR" s={9} /><Icon n="chevD" s={4} /><B n="pan" s={8} /><Icon n="chevD" s={4} /></NavBar>
            </Canvas>
            <Scroll $top={48} $h={3}><Icon n="chevU" s={7} /><Icon n="chevD" s={7} /></Scroll>
          </CanvasRow>
          <ViewBar><B n="glasses" s={8} /><B n="lamp" s={8} /><B n="chevL" s={6} /><ThumbH /><B n="chevR" s={6} /><Gap $w={8} /></ViewBar>
        </Work>
      </Body>

      <Status>
        <Msg>Clic para seleccionar, TAB para alternar, CTRL para añadir y MAYÚS para anular una selección.</Msg>
        <B n="worksets" />
        <SelectWrap $w={110} $dim><Select aria-label="Subproyecto activo" /><Icon n="chevD" s={5} /></SelectWrap>
        <Gap $w={2} /><PlainButton><Icon n="people" /><Dim>:0</Dim></PlainButton><Gap $w={1} />
        <B n="list" /><B n="listOff" />
        <SelectWrap $w={109} $dim><Select aria-label="Opción de diseño"><option>Modelo base</option></Select><Icon n="chevD" s={5} /></SelectWrap>
        <Space />
        <Tools>
          {["selLink", "selUnder", "selPin", "selFace", "selDrag", "spinner"].map(n => <Tool key={n} aria-label={n}><Icon n={n} /></Tool>)}
          <PlainButton><Icon n="funnel" />:0</PlainButton>
        </Tools>
      </Status>

      <Taskbar>
        <Weather>
          <svg width="16" height="18" viewBox="0 0 16 18" aria-hidden="true">
            <circle cx="6" cy="10" r="4" fill="#f4bd3f" /><path d="M0 11h12M1 14h10" stroke="#e9a33a" strokeWidth="1.500" />
            <circle cx="11" cy="5" r="4.500" fill="#f28a99" /><text x="11" y="7" fontSize="6" textAnchor="middle" fill="#222">7</text>
          </svg>
          <div><span>19°C</span><span>Humo</span></div>
        </Weather>
        <Apps>
          <B n="win" s={13} />
          <TaskSearch>
            <Icon n="search" s={9} /><input placeholder="Búsqueda" aria-label="Búsqueda" />
            <svg width="25" height="13" viewBox="0 0 25 13" aria-hidden="true">
              <path d="M0 9l4-6 4 3 4-5 5 4 4-3 4 6-2 3H2z" fill="#3f8f6c" /><path d="M1 10h23l-2 3H3z" fill="#3fb3d8" />
              <path d="M4 8h3v2H4zM17 7h4v3h-4z" fill="#e2703a" /><path d="M9 6h6v4H9z" fill="#f0cf6c" /><circle cx="12" cy="4" r="1.500" fill="#eee" /><circle cx="19" cy="4" r="1.500" fill="#d94b4b" />
            </svg>
          </TaskSearch>
          <AppBtn aria-label="Vista de tareas"><Icon n="task" s={13} /></AppBtn>
          <AppBtn $run="#aaa" aria-label="Archivos"><Icon n="folder" s={13} /></AppBtn>
          <AppBtn aria-label="Tienda"><Icon n="store" s={12} /></AppBtn>
          <AppBtn aria-label="Chrome"><Icon n="chrome" s={12} /></AppBtn>
          <AppBtn $run="#aaa" aria-label="Edge"><Icon n="edge" s={13} /></AppBtn>
          <AppBtn $on $run="#4cc8f0" aria-label="Revit">
            <svg width="12" height="13" viewBox="0 0 12 13"><rect width="12" height="13" rx="1" fill="#1a66f0" /><text x="6" y="8" fontSize="8" fontWeight="700" textAnchor="middle" fill="#fff">R</text><text x="6" y="12" fontSize="3" fontWeight="700" textAnchor="middle" fill="#fff">RVT</text></svg>
          </AppBtn>
        </Apps>
        <Tray>
          <B n="chevU" s={8} /><Gap $w={1} /><B n="cloud" s={10} /><Lang>{"ESP\nLAA"}</Lang>
          <B n="wifi" /><B n="volume" /><B n="battery" /><Clock>{"23:28\n2/4/2025"}</Clock><B n="bell" />
        </Tray>
      </Taskbar>
    </Shell>
  );
}
